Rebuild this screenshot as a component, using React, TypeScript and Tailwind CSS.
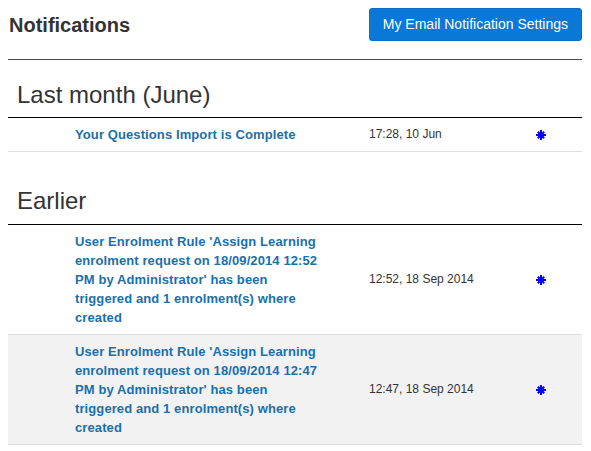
import React from "react";

const Star = () => (
  <svg width="10" height="10" viewBox="0 0 10 10" className="block">
    <g stroke="#0000ff" strokeWidth="2" strokeLinecap="butt">
      <line x1="5" y1="0" x2="5" y2="10" />
      <line x1="0" y1="5" x2="10" y2="5" />
      <line x1="1.8" y1="1.8" x2="8.2" y2="8.2" />
      <line x1="8.2" y1="1.8" x2="1.8" y2="8.2" />
    </g>
    <circle cx="5" cy="5" r="2.6" fill="#0000ff" />
  </svg>
);

type Row = { subject: string; time: string; shaded?: boolean };

const Table = ({ rows }: { rows: Row[] }) => (
  <div className="border-t border-black">
    {rows.map((r, i) => (
      <div
        key={i}
        className={`flex items-center border-b border-[#dddddd] py-[7px] ${r.shaded ? "bg-[#f2f2f2]" : "bg-white"}`}
      >
        <div className="w-[67px] shrink-0" />
        <div className="w-[294px] shrink-0 pr-[46px] text-[13px] leading-[19px] font-bold text-[#1a6fad] tracking-[0.1px]">
          {r.subject}
        </div>
        <div className="w-[167px] shrink-0 text-[12px] leading-[19px] text-[#333333]">
          {r.time}
        </div>
        <div className="flex items-center">
          <Star />
        </div>
      </div>
    ))}
  </div>
);

export default function App() {
  return (
    <div
      className="w-[591px] h-[451px] bg-white overflow-hidden"
      style={{ fontFamily: '"Liberation Sans", Arial, sans-serif' }}
    >
      <div className="ml-[8px] mr-[9px]">
        <div className="flex items-center justify-between pt-[8px] pb-[18px] border-b border-[#4a4a4a]">
          <h1 className="ml-[1px] text-[20px] font-bold text-[#333333] leading-[24px]">
            Notifications
          </h1>
          <button className="h-[33px] px-[13px] rounded-[3px] bg-[#0a78d6] text-white text-[14px] border border-[#0a6fc4]">
            My Email Notification Settings
          </button>
        </div>

        <h2 className="mt-[22px] mb-[9px] ml-[9px] text-[24px] leading-[26px] text-[#333333] font-normal">
          Last month (June)
        </h2>
        <Table rows={[{ subject: "Your Questions Import is Complete", time: "17:28, 10 Jun" }]} />

        <h2 className="mt-[36px] mb-[10px] ml-[9px] text-[24px] leading-[26px] text-[#333333] font-normal">
          Earlier
        </h2>
        <Table
          rows={[
            {
              subject:
                "User Enrolment Rule 'Assign Learning enrolment request on 18/09/2014 12:52 PM by Administrator' has been triggered and 1 enrolment(s) where created",
              time: "12:52, 18 Sep 2014",
            },
            {
              subject:
                "User Enrolment Rule 'Assign Learning enrolment request on 18/09/2014 12:47 PM by Administrator' has been triggered and 1 enrolment(s) where created",
              time: "12:47, 18 Sep 2014",
              shaded: true,
            },
          ]}
        />
      </div>
    </div>
  );
}
